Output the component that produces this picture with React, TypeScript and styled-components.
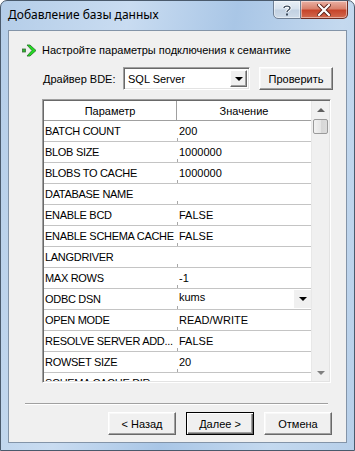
import React from 'react'
import styled, { createGlobalStyle } from 'styled-components'

const GlobalStyle = createGlobalStyle`
  html, body {
    margin: 0;
    padding: 0;
    background: #ffffff;
  }
  body {
    font-family: 'Liberation Sans', Arial, sans-serif;
  }
`

const Window = styled.div`
  position: relative;
  width: 355px;
  height: 451px;
  box-sizing: border-box;
  display: flex;
  flex-direction: column;
  border: 1px solid #4a5a6c;
  border-radius: 7px 7px 0 0;
  background: linear-gradient(100deg, #b4cde8 0%, #c9dcf1 30%, #a9c6e6 55%, #c4d9ef 80%, #b7cfe9 100%);
  overflow: hidden;
`

const TitleBar = styled.div`
  height: 29px;
  display: flex;
  align-items: flex-start;
  flex-shrink: 0;
`

const Title = styled.div`
  margin-top: 6px;
  margin-left: 7px;
  font-family: 'Noto Sans', 'Open Sans', sans-serif;
  font-size: 12px;
  line-height: 16px;
  color: #000;
`

const Caption = styled.div`
  margin-left: auto;
  margin-right: 6px;
  margin-top: -1px;
  display: flex;
`

const CapButton = styled.div<{ $close?: boolean }>`
  width: ${p => (p.$close ? '47px' : '28px')};
  height: 19px;
  box-sizing: border-box;
  display: flex;
  align-items: center;
  justify-content: center;
  border: 1px solid ${p => (p.$close ? '#6d2c22' : '#6f7f94')};
  border-left-width: ${p => (p.$close ? '0' : '1px')};
  border-radius: ${p => (p.$close ? '0 0 5px 0' : '0 0 0 5px')};
  background: ${p =>
    p.$close
      ? 'linear-gradient(#eab1a4 0%, #d9826d 45%, #c6452b 55%, #d26a4f 100%)'
      : 'linear-gradient(#e9eff6 0%, #d7e2ee 45%, #c2d1e2 55%, #cfdbe9 100%)'};
  box-shadow: inset 0 0 0 1px rgba(255, 255, 255, 0.45);
`

const Client = styled.div`
  flex: 1;
  margin: 0 7px 7px 7px;
  border: 1px solid #8394a8;
  background: #f0f0f0;
  display: flex;
  flex-direction: column;
  font-size: 11px;
  color: #000;
`

const Heading = styled.div`
  margin-top: 11px;
  padding-left: 13px;
  height: 16px;
  display: flex;
  align-items: center;
  gap: 4px;
`

const DriverRow = styled.div`
  margin-top: 9px;
  padding-left: 34px;
  height: 23px;
  display: flex;
  align-items: center;
`

const Label = styled.div`
  width: 80px;
`

const Select = styled.div`
  width: 127px;
  height: 23px;
  box-sizing: border-box;
  background: #fff;
  border: 1px solid;
  border-color: #a0a0a0 #fff #fff #a0a0a0;
  box-shadow: inset 1px 1px 0 #696969, inset -1px -1px 0 #e3e3e3;
  display: flex;
  align-items: center;
  padding: 2px 2px 2px 4px;
`

const SelectText = styled.div`
  flex: 1;
`

const DropButton = styled.div`
  width: 17px;
  height: 17px;
  box-sizing: border-box;
  display: flex;
  align-items: center;
  justify-content: center;
  background: #f0f0f0;
  border: 1px solid;
  border-color: #fff #696969 #696969 #fff;
  box-shadow: inset -1px -1px 0 #a0a0a0;
`

const Arrow = styled.div`
  width: 0;
  height: 0;
  border-left: 4px solid transparent;
  border-right: 4px solid transparent;
  border-top: 4px solid #000;
`

const Button = styled.div<{ $default?: boolean; $w?: number }>`
  width: ${p => p.$w ?? 68}px;
  height: 23px;
  box-sizing: border-box;
  display: flex;
  align-items: center;
  justify-content: center;
  background: #f0f0f0;
  border: 1px solid;
  border-color: ${p => (p.$default ? '#000' : '#fff #696969 #696969 #fff')};
  box-shadow: ${p =>
    p.$default
      ? 'inset 1px 1px 0 #fff, inset -1px -1px 0 #696969, inset -2px -2px 0 #a0a0a0'
      : 'inset -1px -1px 0 #a0a0a0, inset 1px 1px 0 #f8f8f8'};
`

const CheckButton = styled(Button)`
  margin-left: 9px;
`

const Grid = styled.div`
  margin-top: 9px;
  margin-left: 33px;
  width: 289px;
  height: 284px;
  box-sizing: border-box;
  border: 1px solid;
  border-color: #a0a0a0 #fff #fff #a0a0a0;
  box-shadow: inset 1px 1px 0 #696969, inset -1px -1px 0 #e3e3e3;
  background: #fff;
  display: flex;
  padding: 1px;
`

const Table = styled.div`
  flex: 1;
  overflow: hidden;
  display: flex;
  flex-direction: column;
`

const Row = styled.div<{ $head?: boolean }>`
  height: ${p => (p.$head ? 19 : 20)}px;
  flex-shrink: 0;
  display: grid;
  grid-template-columns: 133px 1fr;
  border-bottom: 1px solid ${p => (p.$head ? '#a0a0a0' : '#c4c4c4')};
`

const HeadCell = styled.div<{ $first?: boolean }>`
  display: flex;
  align-items: center;
  justify-content: center;
  border-right: ${p => (p.$first ? '1px solid #a0a0a0' : 'none')};
`

const NameCell = styled.div`
  display: flex;
  align-items: center;
  padding-left: 1px;
  letter-spacing: -0.3px;
  white-space: nowrap;
  overflow: hidden;
`

const ValueCell = styled.div<{ $combo?: boolean }>`
  position: relative;
  display: flex;
  align-items: ${p => (p.$combo ? 'flex-start' : 'center')};
  padding-left: 2px;
  padding-top: ${p => (p.$combo ? '2px' : '0')};
  &::before {
    content: '';
    position: absolute;
    left: 0;
    bottom: 0;
    width: 1px;
    height: 3px;
    background: #a8a8a8;
  }
`

const ComboButton = styled.div`
  position: absolute;
  right: 0;
  top: 1px;
  bottom: 1px;
  width: 17px;
  background: #f0f0f0;
  display: flex;
  align-items: center;
  justify-content: center;
`

const Scrollbar = styled.div`
  width: 17px;
  background: #f0f0f0;
  border-left: 1px solid #e8e8e8;
  display: flex;
  flex-direction: column;
  align-items: center;
`

const ScrollArrow = styled.div<{ $down?: boolean }>`
  height: 17px;
  width: 100%;
  display: flex;
  align-items: center;
  justify-content: center;
  &::after {
    content: '';
    width: 0;
    height: 0;
    border-left: 4px solid transparent;
    border-right: 4px solid transparent;
    ${p => (p.$down ? 'border-top: 4px solid #808080;' : 'border-bottom: 4px solid #606060;')}
  }
`

const Thumb = styled.div`
  width: 15px;
  height: 15px;
  margin-top: 1px;
  box-sizing: border-box;
  border: 1px solid #9a9a9a;
  border-radius: 2px;
  background: linear-gradient(90deg, #f2f2f2 0%, #e6e6e6 50%, #d6d6d6 51%, #dcdcdc 100%);
`

const Track = styled.div`
  flex: 1;
`

const Separator = styled.div`
  margin-top: 20px;
  margin-left: 16px;
  width: 303px;
  height: 1px;
  background: #a0a0a0;
  border-bottom: 1px solid #fff;
`

const Buttons = styled.div`
  margin-top: 7px;
  padding-right: 14px;
  display: flex;
  justify-content: flex-end;
  gap: 10px;
`

const rows: [string, string][] = [
  ['BATCH COUNT', '200'],
  ['BLOB SIZE', '1000000'],
  ['BLOBS TO CACHE', '1000000'],
  ['DATABASE NAME', ''],
  ['ENABLE BCD', 'FALSE'],
  ['ENABLE SCHEMA CACHE', 'FALSE'],
  ['LANGDRIVER', ''],
  ['MAX ROWS', '-1'],
  ['ODBC DSN', 'kums'],
  ['OPEN MODE', 'READ/WRITE'],
  ['RESOLVE SERVER ADD...', 'FALSE'],
  ['ROWSET SIZE', '20'],
  ['SCHEMA CACHE DIR', ''],
]

function GreenArrow() {
  return (
    <svg width="16" height="13" viewBox="0 0 16 13">
      <rect x="0.5" y="5" width="3" height="3" fill="#2db82d" stroke="#3a6a3a" strokeWidth="0.8" />
      <path d="M5 1 L8 1 L14 6.5 L8 12 L5 12 L10 6.5 Z" fill="#22dd22" stroke="#2a7a2a" strokeWidth="0.9" strokeLinejoin="round" />
    </svg>
  )
}

function App() {
  return (
    <>
      <GlobalStyle />
      <Window>
        <TitleBar>
          <Title>Добавление базы данных</Title>
          <Caption>
            <CapButton>
              <svg width="10" height="12" viewBox="0 0 10 12">
                <path d="M2 4 C2 1.5 8 1.5 8 4 C8 6 5 6 5 8" fill="none" stroke="#fff" strokeWidth="3" />
                <path d="M2 4 C2 1.5 8 1.5 8 4 C8 6 5 6 5 8" fill="none" stroke="#3d4b5c" strokeWidth="1.4" />
                <rect x="4" y="9.5" width="2" height="2" fill="#3d4b5c" />
              </svg>
            </CapButton>
            <CapButton $close>
              <svg width="14" height="12" viewBox="0 0 14 12">
                <path d="M2 1 L12 11 M12 1 L2 11" stroke="#5a2018" strokeWidth="4" strokeLinecap="square" />
                <path d="M2 1 L12 11 M12 1 L2 11" stroke="#fff" strokeWidth="2.2" strokeLinecap="square" />
              </svg>
            </CapButton>
          </Caption>
        </TitleBar>
        <Client>
          <Heading>
            <GreenArrow />
            <span>Настройте параметры подключения к семантике</span>
          </Heading>
          <DriverRow>
            <Label>Драйвер BDE:</Label>
            <Select>
              <SelectText>SQL Server</SelectText>
              <DropButton>
                <Arrow />
              </DropButton>
            </Select>
            <CheckButton $w={74}>Проверить</CheckButton>
          </DriverRow>
          <Grid>
            <Table>
              <Row $head>
                <HeadCell $first>Параметр</HeadCell>
                <HeadCell>Значение</HeadCell>
              </Row>
              {rows.map(([name, value]) => (
                <Row key={name}>
                  <NameCell>{name}</NameCell>
                  <ValueCell $combo={name === 'ODBC DSN'}>
                    {value}
                    {name === 'ODBC DSN' && (
                      <ComboButton>
                        <Arrow />
                      </ComboButton>
                    )}
                  </ValueCell>
                </Row>
              ))}
            </Table>
            <Scrollbar>
              <ScrollArrow />
              <Thumb />
              <Track />
              <ScrollArrow $down />
            </Scrollbar>
          </Grid>
          <Separator />
          <Buttons>
            <Button>&lt; Назад</Button>
            <Button $default>Далее &gt;</Button>
            <Button>Отмена</Button>
          </Buttons>
        </Client>
      </Window>
    </>
  )
}

export default App
